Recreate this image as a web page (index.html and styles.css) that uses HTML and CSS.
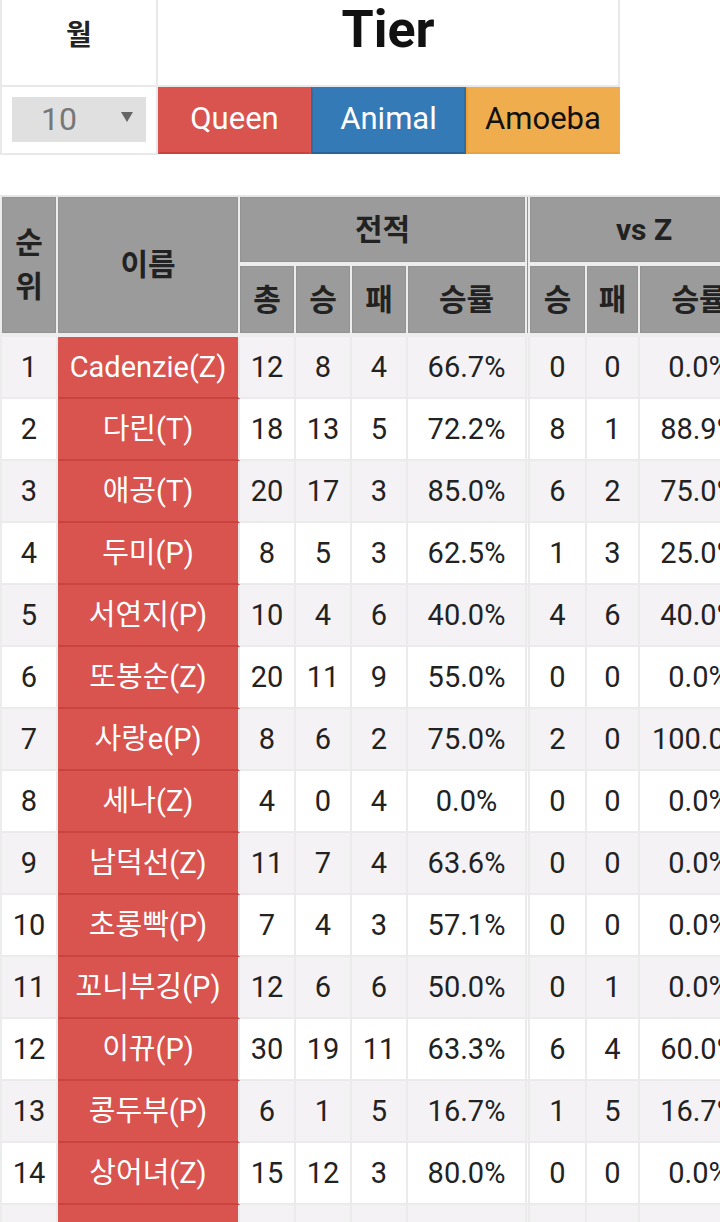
FILE: index.html
```html
<!DOCTYPE html>
<html lang="ko">
<head>
<meta charset="utf-8">
<title>Tier</title>
<link rel="stylesheet" href="styles.css">
</head>
<body>
<div class="page">
  <div class="top">
    <div class="top-label">월</div>
    <h1 class="top-title">Tier</h1>
    <div class="top-select-cell">
      <div class="select-wrap">
        <select class="month-select">
          <option>10</option>
        </select>
      </div>
    </div>
    <div class="tier-buttons">
      <button class="tier-btn queen">Queen</button>
      <button class="tier-btn animal">Animal</button>
      <button class="tier-btn amoeba">Amoeba</button>
    </div>
  </div>

  <div class="ranking-wrap">
    <table class="ranking">
      <colgroup>
        <col class="c-rank">
        <col class="c-name">
        <col class="c-num">
        <col class="c-num">
        <col class="c-num">
        <col class="c-rate">
        <col class="c-sep">
        <col class="c-vw">
        <col class="c-vl">
        <col class="c-vrate">
      </colgroup>
      <thead>
        <tr class="h-row1">
          <th rowspan="2" class="h-rank">순위</th>
          <th rowspan="2">이름</th>
          <th colspan="4">전적</th>
          <th rowspan="2" class="sep"></th>
          <th colspan="3">vs Z</th>
        </tr>
        <tr class="h-row2">
          <th>총</th>
          <th>승</th>
          <th>패</th>
          <th>승률</th>
          <th>승</th>
          <th>패</th>
          <th>승률</th>
        </tr>
      </thead>
      <tbody>
        <tr><td>1</td><td class="player">Cadenzie(Z)</td><td>12</td><td>8</td><td>4</td><td>66.7%</td><td class="sep"></td><td>0</td><td>0</td><td>0.0%</td></tr>
        <tr><td>2</td><td class="player">다린(T)</td><td>18</td><td>13</td><td>5</td><td>72.2%</td><td class="sep"></td><td>8</td><td>1</td><td>88.9%</td></tr>
        <tr><td>3</td><td class="player">애공(T)</td><td>20</td><td>17</td><td>3</td><td>85.0%</td><td class="sep"></td><td>6</td><td>2</td><td>75.0%</td></tr>
        <tr><td>4</td><td class="player">두미(P)</td><td>8</td><td>5</td><td>3</td><td>62.5%</td><td class="sep"></td><td>1</td><td>3</td><td>25.0%</td></tr>
        <tr><td>5</td><td class="player">서연지(P)</td><td>10</td><td>4</td><td>6</td><td>40.0%</td><td class="sep"></td><td>4</td><td>6</td><td>40.0%</td></tr>
        <tr><td>6</td><td class="player">또봉순(Z)</td><td>20</td><td>11</td><td>9</td><td>55.0%</td><td class="sep"></td><td>0</td><td>0</td><td>0.0%</td></tr>
        <tr><td>7</td><td class="player">사랑e(P)</td><td>8</td><td>6</td><td>2</td><td>75.0%</td><td class="sep"></td><td>2</td><td>0</td><td>100.0%</td></tr>
        <tr><td>8</td><td class="player">세나(Z)</td><td>4</td><td>0</td><td>4</td><td>0.0%</td><td class="sep"></td><td>0</td><td>0</td><td>0.0%</td></tr>
        <tr><td>9</td><td class="player">남덕선(Z)</td><td>11</td><td>7</td><td>4</td><td>63.6%</td><td class="sep"></td><td>0</td><td>0</td><td>0.0%</td></tr>
        <tr><td>10</td><td class="player">초롱빡(P)</td><td>7</td><td>4</td><td>3</td><td>57.1%</td><td class="sep"></td><td>0</td><td>0</td><td>0.0%</td></tr>
        <tr><td>11</td><td class="player">꼬니부깅(P)</td><td>12</td><td>6</td><td>6</td><td>50.0%</td><td class="sep"></td><td>0</td><td>1</td><td>0.0%</td></tr>
        <tr><td>12</td><td class="player">이뀨(P)</td><td>30</td><td>19</td><td>11</td><td>63.3%</td><td class="sep"></td><td>6</td><td>4</td><td>60.0%</td></tr>
        <tr><td>13</td><td class="player">콩두부(P)</td><td>6</td><td>1</td><td>5</td><td>16.7%</td><td class="sep"></td><td>1</td><td>5</td><td>16.7%</td></tr>
        <tr><td>14</td><td class="player">상어녀(Z)</td><td>15</td><td>12</td><td>3</td><td>80.0%</td><td class="sep"></td><td>0</td><td>0</td><td>0.0%</td></tr>
        <tr><td>15</td><td class="player"></td><td></td><td></td><td></td><td></td><td class="sep"></td><td></td><td></td><td></td></tr>
      </tbody>
    </table>
  </div>
</div>
</body>
</html>
```

FILE: styles.css
```css
* {
  box-sizing: border-box;
}

html,
body {
  margin: 0;
  padding: 0;
  background: #ffffff;
}

body {
  font-family: Roboto, "Noto Sans CJK KR", sans-serif;
  color: #222222;
  width: 720px;
  height: 1222px;
  overflow: hidden;
}

.page {
  width: 720px;
  overflow: hidden;
}

/* ---------- top selector table ---------- */
.top {
  display: grid;
  grid-template-columns: 158px 462px;
  width: 620px;
}

.top-label {
  height: 87px;
  border-left: 2px solid #e9e9e9;
  border-right: 2px solid #e9e9e9;
  border-bottom: 2px solid #e9e9e9;
  padding-top: 16px;
  text-align: center;
  font-size: 28px;
  font-weight: 700;
  line-height: 40px;
}

.top-title {
  margin: 0;
  height: 87px;
  border-right: 2px solid #e9e9e9;
  border-bottom: 2px solid #e9e9e9;
  text-align: center;
  font-size: 52px;
  font-weight: 700;
  line-height: 60px;
  color: #111111;
}

.top-select-cell {
  height: 68px;
  border-left: 2px solid #e9e9e9;
  border-right: 2px solid #e9e9e9;
  border-bottom: 2px solid #e9e9e9;
  padding: 10px 10px 0 10px;
}

.select-wrap {
  position: relative;
  width: 134px;
  height: 45px;
}

.select-wrap::after {
  content: "";
  position: absolute;
  right: 13px;
  top: 15px;
  width: 0;
  height: 0;
  border-left: 6px solid transparent;
  border-right: 6px solid transparent;
  border-top: 10px solid #666666;
  pointer-events: none;
}

.month-select {
  -webkit-appearance: none;
  appearance: none;
  display: block;
  width: 134px;
  height: 45px;
  margin: 0;
  border: none;
  border-radius: 0;
  background: #e0e0e0;
  color: #777777;
  font-family: Roboto, sans-serif;
  font-size: 32px;
  line-height: 45px;
  padding: 0 0 0 29px;
}

.tier-buttons {
  display: flex;
  height: 67px;
}

.tier-btn {
  display: flex;
  align-items: center;
  justify-content: center;
  height: 67px;
  margin: 0;
  padding: 0 0 4px 0;
  border: 2px solid transparent;
  border-radius: 0;
  font-family: Roboto, sans-serif;
  font-size: 31px;
  font-weight: 400;
  cursor: pointer;
}

.queen {
  width: 153px;
  background: #d9534f;
  border-color: #d9534f #d9534f #c9433e #d9534f;
  color: #ffffff;
}

.animal {
  width: 155px;
  background: #337ab7;
  border-color: #337ab7 #2e6da4 #2a6398 #2e6da4;
  color: #ffffff;
}

.amoeba {
  width: 154px;
  background: #f0ad4e;
  border-color: #f0ad4e #f0ad4e #e9a243 #eea236;
  color: #111111;
}

/* ---------- ranking table ---------- */
.ranking-wrap {
  margin-top: 40px;
}

.ranking {
  border-collapse: separate;
  border-spacing: 0;
  table-layout: fixed;
  width: 760px;
  border-top: 2px solid #e6e6e6;
  border-left: 2px solid #ececec;
  font-size: 29px;
}

.c-rank { width: 56px; }
.c-name { width: 182px; }
.c-num { width: 56px; }
.c-rate { width: 119px; }
.c-sep { width: 3px; }
.c-vw { width: 57px; }
.c-vl { width: 53px; }
.c-vrate { width: 120px; }

.ranking th {
  background: #9b9b9b;
  color: #222222;
  font-size: 30px;
  font-weight: 700;
  line-height: 44px;
  padding: 0 8px;
  text-align: center;
  vertical-align: middle;
  border-right: 2px solid #ededed;
  border-bottom: 4px solid #ededed;
  box-shadow: inset 0 0 0 1px rgba(0, 0, 0, 0.05);
}

.h-row1 {
  height: 69px;
}

.h-row2 {
  height: 71px;
}

.ranking td {
  padding: 10px 8px;
  line-height: 40px;
  height: 62px;
  text-align: center;
  vertical-align: middle;
  white-space: nowrap;
  overflow: hidden;
  border-right: 2px solid #ebebeb;
  border-bottom: 2px solid #ebebeb;
}

.ranking tbody tr:nth-child(odd) td {
  background: #f4f2f4;
}

.ranking td.player {
  background: #d9534f;
  color: #ffffff;
  border-bottom-color: #cb433e;
}

.ranking tbody tr:nth-child(odd) td.player {
  background: #d9534f;
}

.ranking .sep {
  padding: 0;
}
```
